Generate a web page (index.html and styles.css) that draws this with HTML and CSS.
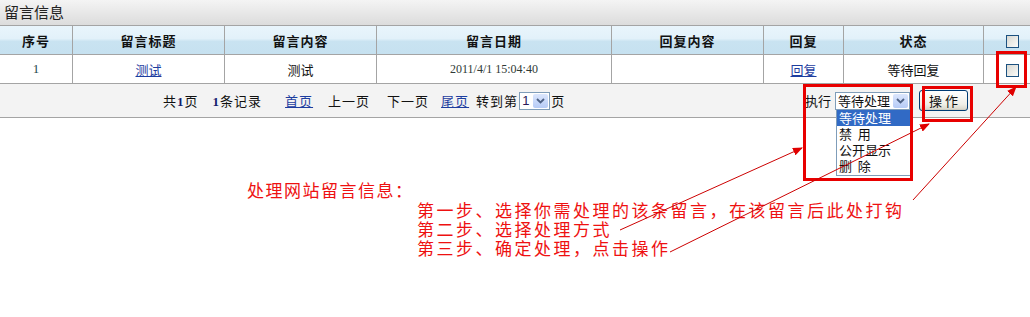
FILE: index.html
```html
<!doctype html>
<html lang="zh-CN">
  <head>
    <meta charset="UTF-8" />
    <title>留言信息</title>
    <link rel="stylesheet" href="styles.css">
  </head>
  <body>
    <div class="title-bar">留言信息</div>

    <table class="msg-table">
      <colgroup>
        <col style="width: 73px" />
        <col style="width: 152px" />
        <col style="width: 152px" />
        <col style="width: 235px" />
        <col style="width: 152px" />
        <col style="width: 80px" />
        <col style="width: 140px" />
        <col style="width: 46px" />
      </colgroup>
      <thead>
        <tr>
          <th>序号</th>
          <th>留言标题</th>
          <th>留言内容</th>
          <th>留言日期</th>
          <th>回复内容</th>
          <th>回复</th>
          <th>状态</th>
          <th class="check-cell"><span class="check"></span></th>
        </tr>
      </thead>
      <tbody>
        <tr>
          <td class="num">1</td>
          <td><a href="#">测试</a></td>
          <td>测试</td>
          <td class="date">2011/4/1 15:04:40</td>
          <td></td>
          <td><a href="#">回复</a></td>
          <td>等待回复</td>
          <td class="check-cell"><span class="check"></span></td>
        </tr>
      </tbody>
    </table>

    <!-- pager + batch actions -->
    <div class="pager">
      <div class="pager-left">
        <span>共<b>1</b>页</span>
        <span class="gap-14"><b>1</b>条记录</span>
        <a href="#" class="gap-23">首页</a>
        <span class="gap-15">上一页</span>
        <span class="gap-17">下一页</span>
        <a href="#" class="gap-12">尾页</a>
        <span class="gap-7">转到第</span>
        <span class="select page-select">1<span class="select-arrow"><svg width="9" height="6" viewBox="0 0 9 6"><path d="M1 1 L4.5 4.5 L8 1" fill="none" stroke="#4d6185" stroke-width="1.8"/></svg></span></span>
        <span>页</span>
      </div>
      <div class="pager-right">
        <span>执行</span>
        <span class="select action-select">等待处理<span class="select-arrow"><svg width="9" height="6" viewBox="0 0 9 6"><path d="M1 1 L4.5 4.5 L8 1" fill="none" stroke="#4d6185" stroke-width="1.8"/></svg></span>
          <div class="dropdown">
            <div class="option selected">等待处理</div>
            <div class="option">禁&nbsp;&nbsp;用</div>
            <div class="option">公开显示</div>
            <div class="option">删&nbsp;&nbsp;除</div>
          </div>
        </span>
        <button class="op-button">操 作</button>
      </div>
    </div>

    <!-- annotation -->
    <div class="notes">
      <div class="notes-head">处理网站留言信息：</div>
      <div class="notes-steps">
        <div>第一步、选择你需处理的该条留言，在该留言后此处打钩</div>
        <div>第二步、选择处理方式</div>
        <div>第三步、确定处理，点击操作</div>
      </div>
    </div>

    <svg class="marks" width="1030" height="317" viewBox="0 0 1030 317">
      <defs>
        <marker id="head" markerWidth="10" markerHeight="8" refX="9" refY="4" orient="auto" markerUnits="userSpaceOnUse">
          <path d="M0 0 L10 4 L0 8 Z" fill="#e00000" />
        </marker>
      </defs>
      <rect x="804.5" y="85.5" width="107" height="94" fill="none" stroke="#e80000" stroke-width="3" />
      <rect x="923.5" y="87.5" width="48" height="33" fill="none" stroke="#e80000" stroke-width="3" />
      <rect x="997.5" y="52.5" width="28" height="34" fill="none" stroke="#e80000" stroke-width="3" />
      <line x1="620" y1="230" x2="802" y2="148" stroke="#cc0000" stroke-width="1" marker-end="url(#head)" />
      <line x1="670" y1="252" x2="929" y2="124" stroke="#cc0000" stroke-width="1" marker-end="url(#head)" />
      <line x1="913" y1="200" x2="1016" y2="87" stroke="#cc0000" stroke-width="1" marker-end="url(#head)" />
    </svg>
  </body>
</html>
```

FILE: styles.css
```css
/* message admin list */
body {
  margin: 0;
  padding: 0;
  width: 1030px;
  height: 317px;
  position: relative;
  overflow: hidden;
  background: #fff;
  color: #111;
  font-family: 'Noto Sans CJK SC', 'Liberation Sans', sans-serif;
  font-size: 13px;
}

.title-bar {
  height: 25px;
  line-height: 24px;
  padding-left: 4px;
  font-size: 15px;
  color: #222;
  background: linear-gradient(#f4f4f4, #dcdcdc);
}

.msg-table {
  width: 1030px;
  table-layout: fixed;
  border-collapse: separate;
  border-spacing: 0;
  border-top: 1px solid #a4a4a4;
}

.msg-table th,
.msg-table td {
  padding: 0;
  text-align: center;
  border-right: 1px solid #a4a4a4;
  border-bottom: 1px solid #a4a4a4;
}

.msg-table th:last-child,
.msg-table td:last-child {
  border-right: none;
}

.msg-table th {
  height: 28px;
  font-weight: bold;
  letter-spacing: 1px;
  background: linear-gradient(#e9f5fc 0%, #e2f1fa 45%, #c9e3f1 55%, #c6e1f0 100%);
}

.msg-table td {
  height: 28px;
  background: #fff;
}

.msg-table a,
.pager a {
  color: #1d3d9f;
  text-decoration: underline;
}

.msg-table .num {
  font-family: 'Liberation Serif', serif;
  font-size: 13px;
  color: #1f4a4a;
}

.msg-table .date {
  font-family: 'Liberation Serif', serif;
  font-size: 12px;
  color: #2f3a36;
}

.check-cell {
  padding-left: 10px !important;
}

.check {
  display: inline-block;
  width: 11px;
  height: 11px;
  border: 1px solid #1c5180;
  background: linear-gradient(135deg, #d8d8d2, #fbfbf9);
  vertical-align: middle;
}

.pager {
  height: 33px;
  display: flex;
  align-items: center;
  background: #f3f3f3;
  border-bottom: 1px solid #a4a4a4;
}

.pager-left {
  display: flex;
  align-items: center;
  padding-left: 163px;
  letter-spacing: 1px;
}

.pager b {
  font-family: 'Liberation Serif', serif;
  color: #14206c;
}

.gap-7 { margin-left: 7px; }
.gap-12 { margin-left: 12px; }
.gap-14 { margin-left: 14px; }
.gap-15 { margin-left: 15px; }
.gap-17 { margin-left: 17px; }
.gap-23 { margin-left: 23px; }

.select {
  position: relative;
  display: inline-flex;
  align-items: center;
  justify-content: space-between;
  box-sizing: border-box;
  height: 18px;
  border: 1px solid #7f9db9;
  background: #fff;
  padding-left: 2px;
  letter-spacing: 0;
}

.page-select {
  width: 31px;
  margin: 0 1px 0 1px;
  font-family: 'Liberation Sans', sans-serif;
  color: #2a1a5a;
}

.action-select {
  width: 75px;
  margin-left: 3px;
  font-size: 13px;
}

.select-arrow {
  width: 15px;
  height: 14px;
  margin-right: 1px;
  display: flex;
  align-items: center;
  justify-content: center;
  border-radius: 2px;
  background: linear-gradient(#dbe6fd, #b6cbf6);
}

.pager-right {
  margin-left: auto;
  padding-right: 62px;
  display: flex;
  align-items: center;
}

.pager-right > span:first-child {
  margin-right: 1px;
}

.dropdown {
  position: absolute;
  top: 16px;
  left: 0;
  width: 73px;
  height: 65px;
  border: 1px solid #7f9db9;
  background: #fff;
  z-index: 2;
}

.option {
  height: 16px;
  line-height: 16px;
  padding-left: 2px;
  font-size: 13px;
  color: #111;
}

.option.selected {
  background: #316ac5;
  color: #fff;
}

.op-button {
  width: 49px;
  height: 21px;
  margin-left: 9px;
  padding: 0;
  border: 1px solid #003c74;
  border-radius: 3px;
  background: linear-gradient(#ffffff, #f0efe8 70%, #d8d5c8);
  box-shadow: inset 0 -1px 0 #d0cfc4;
  font-family: 'Noto Sans CJK SC', sans-serif;
  font-size: 13px;
  color: #111;
}

.notes {
  color: #ee1111;
  padding-top: 62px;
}

.notes-head {
  margin-left: 247px;
  font-size: 17px;
  line-height: 20px;
  letter-spacing: 1.5px;
}

.notes-steps {
  margin-left: 417px;
  font-size: 17px;
  line-height: 19px;
  letter-spacing: 2.5px;
}

.marks {
  position: absolute;
  top: 0;
  left: 0;
  pointer-events: none;
  z-index: 3;
}
```
